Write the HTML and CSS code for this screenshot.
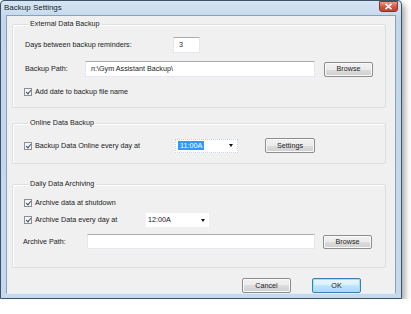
FILE: index.html
```html
<!DOCTYPE html>
<html lang="en">
<head>
	<meta charset="UTF-8">
	<title>Backup Settings</title>
	<link rel="stylesheet" href="styles.css">
</head>
<body>
	<div class="window">
		<div class="titlebar">
			<span class="title">Backup Settings</span>
			<span class="close">
				<svg width="9" height="7" viewBox="0 0 9 7"><path d="M1.5 0.8 L7.5 6.2 M7.5 0.8 L1.5 6.2" stroke="#fff" stroke-width="1.6"/></svg>
			</span>
		</div>
		<div class="client">
			<fieldset class="group g1">
				<legend>External Data Backup</legend>
				<div class="row r-days">
					<span class="label w-days">Days between backup reminders:</span>
					<span class="input days">3</span>
				</div>
				<div class="row r-path">
					<span class="label w-path">Backup Path:</span>
					<span class="input path">n:\Gym Assistant Backup\</span>
					<span class="btn browse">Browse</span>
				</div>
				<div class="row r-check">
					<span class="check"></span>
					<span class="label">Add date to backup file name</span>
				</div>
			</fieldset>

			<fieldset class="group g2">
				<legend>Online Data Backup</legend>
				<div class="row r-online">
					<span class="check"></span>
					<span class="label w-online">Backup Data Online every day at</span>
					<span class="combo focus"><span class="sel">11:00A</span><span class="arrow"></span></span>
					<span class="btn settings">Settings</span>
				</div>
			</fieldset>

			<fieldset class="group g3">
				<legend>Daily Data Archiving</legend>
				<div class="row r-shut">
					<span class="check"></span>
					<span class="label">Archive data at shutdown</span>
				</div>
				<div class="row r-every">
					<span class="check"></span>
					<span class="label w-every">Archive Data every day at</span>
					<span class="combo"><span class="val">12:00A</span><span class="arrow"></span></span>
				</div>
				<div class="row r-apath">
					<span class="label w-apath">Archive Path:</span>
					<span class="input apath"></span>
					<span class="btn browse2">Browse</span>
				</div>
			</fieldset>

			<div class="actions">
				<span class="btn">Cancel</span>
				<span class="btn ok">OK</span>
			</div>
		</div>
	</div>
</body>
</html>
```

FILE: styles.css
```css
*{
	margin: 0;
	padding: 0;
	box-sizing: border-box;
}
body{
	background: #fff;
	font-family: "Liberation Sans", Arial, sans-serif;
	font-size: 7.2px;
	line-height: 8px;
	color: #1a1a1a;
}
.window{
	width: 402px;
	height: 299px;
	border: 1px solid #3c5366;
	border-radius: 4px 4px 0 0;
	background: linear-gradient(#d6e5f4, #c3d7ec 18px, #c6d9ed);
	box-shadow: 3px 4px 6px rgba(0,0,0,0.35);
	display: flex;
	flex-direction: column;
	padding: 0 5px 4px 5px;
}
.titlebar{
	height: 16px;
	display: flex;
	align-items: center;
	justify-content: space-between;
}
.title{
	font-size: 8px;
	color: #0d1a28;
	margin-left: -2px;
	text-shadow: 0 0 2px #eef5fc;
}
.close{
	width: 19px;
	height: 11px;
	margin-right: -2px;
	margin-top: -3px;
	border: 1px solid #7a3a30;
	border-radius: 0 0 3px 3px;
	background: linear-gradient(#e9a08f, #d3533c 55%, #c5422a);
	display: flex;
	align-items: center;
	justify-content: center;
}
.client{
	flex: 1;
	background: #f0f0f0;
	border: 1px solid #8aa2b8;
	border-bottom-color: #e0eef8;
	padding: 0 9px 0 5px;
	display: flex;
	flex-direction: column;
}
.group{
	border: 1px solid #dcdfe2;
	border-radius: 2px;
	padding: 0 0 0 12px;
	box-shadow: inset 1px 1px 0 #fff;
}
.group legend{
	margin-left: 3px;
	padding: 0 2px;
	color: #1a1a1a;
}
.g1{
	margin-top: 4px;
	padding-bottom: 11px;
}
.g2{
	margin-top: 11px;
	padding-bottom: 10px;
}
.g3{
	margin-top: 16px;
	padding-bottom: 18px;
}
.row{
	display: flex;
	align-items: center;
}
.label{
	white-space: nowrap;
}
.input{
	height: 16px;
	background: #fff;
	border: 1px solid #e3e9ef;
	border-top-color: #abadb3;
	display: flex;
	align-items: center;
	padding-left: 5px;
	color: #222;
}
.btn{
	height: 15px;
	width: 50px;
	border: 1px solid #8d8d8d;
	border-radius: 2px;
	background: linear-gradient(#f2f2f2, #ebebeb 50%, #dddddd 50%, #cfcfcf);
	box-shadow: inset 0 0 0 1px #fafafa;
	display: flex;
	align-items: center;
	justify-content: center;
	color: #222;
}
.check{
	width: 8px;
	height: 8px;
	border: 1px solid #8f8f8f;
	background: #f4f4f4;
	margin-right: 3px;
	position: relative;
}
.check::after{
	content: "";
	position: absolute;
	left: 2px;
	top: 0;
	width: 2px;
	height: 4px;
	border: solid #3a4f7a;
	border-width: 0 1px 1px 0;
	transform: rotate(40deg);
}
.combo{
	width: 63px;
	height: 14px;
	background: #fff;
	display: flex;
	align-items: center;
	justify-content: space-between;
	padding: 0 4px 0 2px;
}
.combo.focus{
	border: 1px dotted #c8d4e4;
}
.sel{
	background: #3399ff;
	color: #fff;
	padding: 0 2px;
	line-height: 9px;
}
.arrow{
	width: 0;
	height: 0;
	border-left: 2px solid transparent;
	border-right: 2px solid transparent;
	border-top: 3px solid #111;
}
.r-days{
	margin-top: 9px;
}
.w-days{
	width: 148px;
}
.days{
	width: 27px;
}
.r-path{
	margin-top: 8px;
}
.w-path{
	width: 60px;
}
.path{
	width: 230px;
}
.browse{
	margin-left: 9px;
	width: 49px;
}
.r-check{
	margin-top: 11px;
	margin-left: -1px;
}
.r-online{
	margin-top: 11px;
	margin-left: -1px;
}
.w-online{
	width: 140px;
}
.settings{
	margin-left: 27px;
}
.r-shut{
	margin-top: 11px;
	margin-left: -1px;
}
.r-every{
	margin-top: 6px;
	margin-left: -1px;
}
.w-every{
	width: 111px;
}
.r-apath{
	margin-top: 7px;
	margin-left: -2px;
}
.w-apath{
	width: 64px;
}
.apath{
	width: 228px;
	height: 15px;
}
.browse2{
	margin-left: 8px;
	width: 49px;
	height: 14px;
}
.actions{
	margin-top: 10px;
	display: flex;
	justify-content: flex-end;
	gap: 21px;
	padding-right: 25px;
}
.actions .btn{
	width: 49px;
}
.ok{
	border-color: #3c7fb1;
	box-shadow: inset 0 0 0 1px #9ee0f8;
	background: linear-gradient(#eaf6fd, #d9f0fc 50%, #bee6fd 50%, #a7d9f5);
}
```
